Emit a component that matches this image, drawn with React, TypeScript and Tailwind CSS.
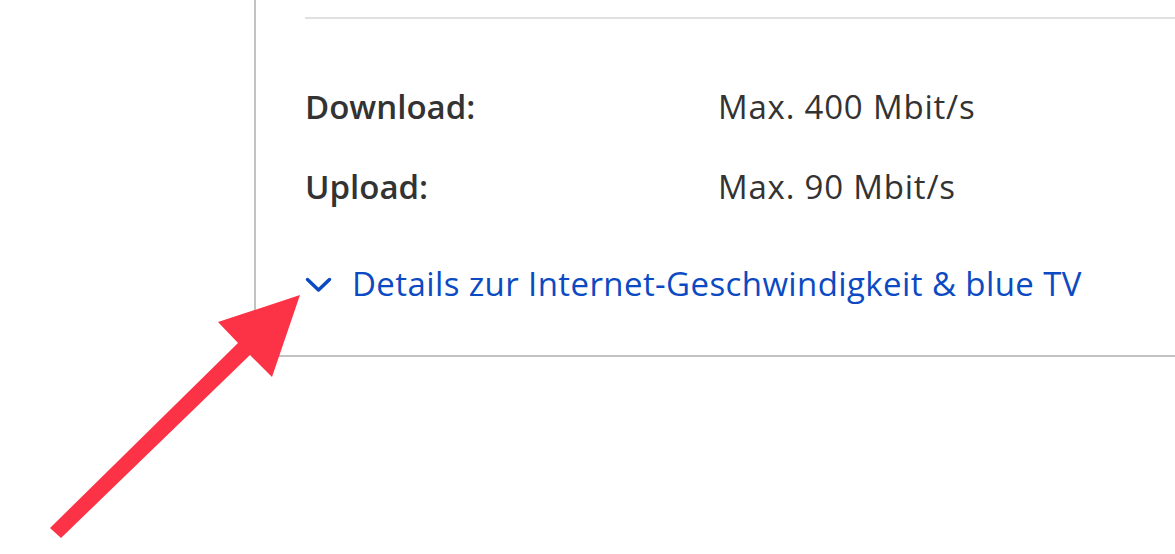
const rows = [
  { label: "Download:", value: "Max. 400 Mbit/s" },
  { label: "Upload:", value: "Max. 90 Mbit/s" },
];

export default function App() {
  return (
    <main
      className="relative h-[554px] w-[1175px] overflow-hidden bg-white text-[#333]"
      style={{ fontFamily: '"Open Sans", "Noto Sans", sans-serif' }}
    >
      <section className="ml-[254px] h-[357px] border-b-2 border-l-2 border-[#c2c2c2] pl-[49px]">
        <div className="pt-[17px]">
          <div className="h-[2px] bg-[#e0e0e0]" />
        </div>

        <dl className="mt-[68px] flex flex-col gap-[40px]">
          {rows.map((r) => (
            <div key={r.label} className="flex text-[33px] leading-[40px]">
              <dt className="w-[413px] font-semibold">{r.label}</dt>
              <dd className="tracking-[0.8px]">{r.value}</dd>
            </div>
          ))}
        </dl>

        <button className="mt-[57px] flex items-center gap-[20px] text-[33px] leading-[40px] tracking-[0.4px] text-[#0b4ac2]">
          <svg width="27" height="16" viewBox="0 0 27 16" className="mt-[2px]">
            <polyline
              points="2.5,2.5 13.5,13 24.5,2.5"
              fill="none"
              stroke="currentColor"
              strokeWidth="3.5"
              strokeLinecap="round"
              strokeLinejoin="round"
            />
          </svg>
          <span>Details zur Internet-Geschwindigkeit &amp; blue TV</span>
        </button>
      </section>

      {/* pointer arrow over the page */}
      <svg
        className="absolute left-0 top-0"
        width="1175"
        height="554"
        viewBox="0 0 1175 554"
      >
        <polygon
          fill="#fc3346"
          points="300,295 272,377 250,355 61,538 50,528 238,343 218,322"
        />
      </svg>
    </main>
  );
}
